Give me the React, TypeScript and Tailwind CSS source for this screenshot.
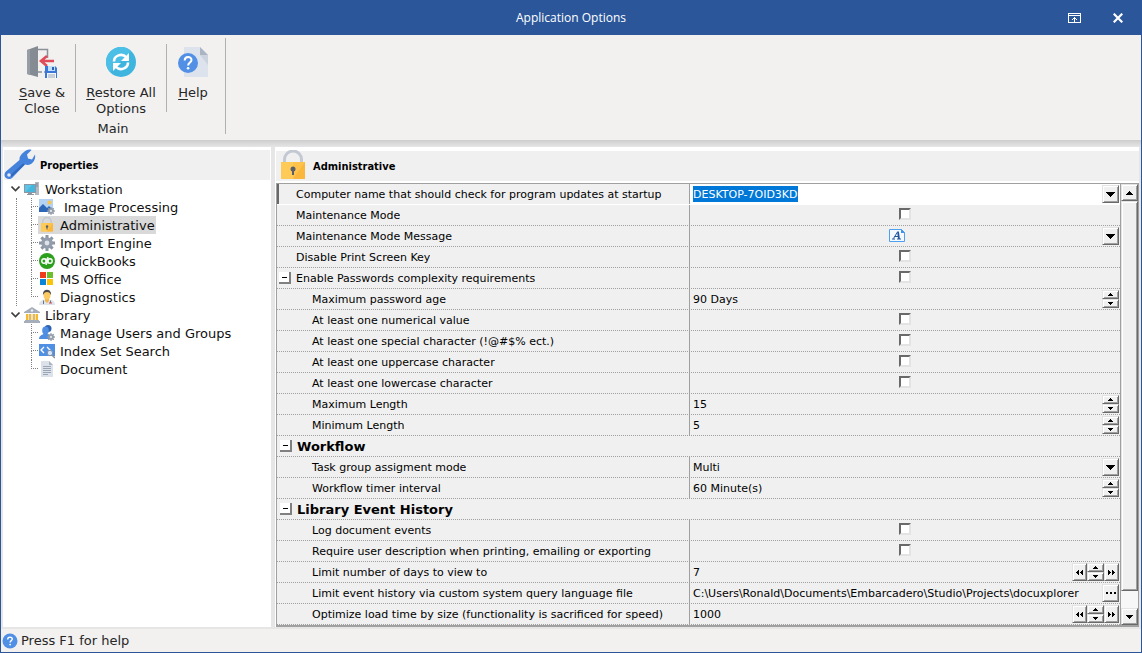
import React from "react";

type Kind = "text" | "check" | "memo" | "spin" | "range" | "select" | "file";

interface Option {
  id: string;
  label: string;
  kind: Kind;
  value?: string;
  level?: number;
  expandable?: boolean;
  active?: boolean;
}

interface Group {
  title?: string;
  options: Option[];
}

interface TreeItem {
  label: string;
  icon: React.ReactNode;
  selected?: boolean;
  indented?: boolean;
}

interface TreeBranch {
  label: string;
  icon: React.ReactNode;
  items: TreeItem[];
}

const groups: Group[] = [
  {
    options: [
      { id: "computer", label: "Computer name that should check for program updates at startup", kind: "text", value: "DESKTOP-7OID3KD", active: true },
      { id: "maintenance", label: "Maintenance Mode", kind: "check" },
      { id: "message", label: "Maintenance Mode Message", kind: "memo" },
      { id: "printscreen", label: "Disable Print Screen Key", kind: "check" },
      { id: "complexity", label: "Enable Passwords complexity requirements", kind: "check", expandable: true },
      { id: "age", label: "Maximum password age", kind: "spin", value: "90 Days", level: 1 },
      { id: "numerical", label: "At least one numerical value", kind: "check", level: 1 },
      { id: "special", label: "At least one special character (!@#$% ect.)", kind: "check", level: 1 },
      { id: "uppercase", label: "At least one uppercase character", kind: "check", level: 1 },
      { id: "lowercase", label: "At least one lowercase character", kind: "check", level: 1 },
      { id: "maxlength", label: "Maximum Length", kind: "spin", value: "15", level: 1 },
      { id: "minlength", label: "Minimum Length", kind: "spin", value: "5", level: 1 },
    ],
  },
  {
    title: "Workflow",
    options: [
      { id: "assignment", label: "Task group assigment mode", kind: "select", value: "Multi", level: 1 },
      { id: "timer", label: "Workflow timer interval", kind: "spin", value: "60 Minute(s)", level: 1 },
    ],
  },
  {
    title: "Library Event History",
    options: [
      { id: "log", label: "Log document events", kind: "check", level: 1 },
      { id: "description", label: "Require user description when printing, emailing or exporting", kind: "check", level: 1 },
      { id: "days", label: "Limit number of days to view to", kind: "range", value: "7", level: 1 },
      { id: "query", label: "Limit event history via custom system query language file", kind: "file", value: "C:\\Users\\Ronald\\Documents\\Embarcadero\\Studio\\Projects\\docuxplorer", level: 1 },
      { id: "optimize", label: "Optimize load time by size (functionality is sacrificed for speed)", kind: "range", value: "1000", level: 1 },
    ],
  },
];

/* ---------- icons ---------- */

const SaveCloseIcon = () => (
  <svg width="32" height="32" viewBox="0 0 32 32" className="shrink-0">
    <path d="M12 3.500h9.500V12M21 26h-3M12 26h4" fill="none" stroke="#8b9199" strokeWidth="1.500" />
    <path d="M1 4l11-4v31L1 28z" fill="#858b93" />
    <path d="M1 4l3-1v26l-3-1z" fill="#979da5" />
    <path d="M21 10l-6 5 6 5M15 15h13" fill="none" stroke="#e14b59" strokeWidth="2.600" />
    <path d="M19 20h10l2 2v10H19z" fill="#3b77d8" />
    <path d="M22 20h7v5h-7z" fill="#bfe0f8" />
    <path d="M26 21h2v3h-2z" fill="#2f5fb0" />
    <path d="M21 27h9v5h-9z" fill="#f4f6f9" />
    <path d="M22 29h7M22 31h7" stroke="#9aa7b8" />
  </svg>
);

const RestoreIcon = () => (
  <svg width="32" height="32" viewBox="0 0 32 32" className="shrink-0">
    <circle cx="16" cy="16" r="15" fill="#3fb4de" />
    <path d="M1 16a15 15 0 0 1 25-11L5 26a15 15 0 0 1-4-10z" fill="#4cbfe6" />
    <g fill="none" stroke="#fff" strokeWidth="2.600">
      <path d="M9 15.500c0-6 8-9 12.500-4" />
      <path d="M23 16.500c0 6-8 9-12.500 4" />
    </g>
    <path d="M24 7v8h-8z" fill="#fff" />
    <path d="M8 25v-8h8z" fill="#fff" />
  </svg>
);

const HelpPageIcon = () => (
  <svg width="32" height="32" viewBox="0 0 32 32" className="shrink-0">
    <path d="M7 1h16l8 8v22H7z" fill="#dde3ec" />
    <path d="M23 9h8v10z" fill="#cbd3df" />
    <path d="M23 1l8 8h-8z" fill="#aab4c3" />
    <circle cx="11" cy="17" r="10" fill="#5290e6" />
    <path d="M7.700 14.500c0-4.600 6.800-4.400 6.800-.5 0 2.500-3.400 2.400-3.400 5.500" fill="none" stroke="#fff" strokeWidth="2" />
    <circle cx="11.100" cy="22.300" r="1.300" fill="#fff" />
  </svg>
);

const WrenchIcon = () => (
  <svg width="32" height="32" viewBox="0 0 32 32">
    <path
      d="M20 3c2-2 5-3 7.500-2L23 5.500l1 4 4 1 3-5c.8 4-1 7.500-4 9.500-2 1.200-4 1.200-6 .6L9 28c-2 2.500-5 2.500-7 1s-2-5 .5-7L15.500 11c-.5-3 1.500-6 4.500-8z"
      fill="#4482dc"
    />
    <path d="M20 15L7 27" fill="none" stroke="#2f68bd" strokeWidth="2" />
    <circle cx="5" cy="26" r="1.800" fill="#dfe9f7" />
  </svg>
);

const LockIcon = ({ size }: { size: number }) => (
  <svg width={size} height={size} viewBox="0 0 32 32">
    <path d="M7.500 13V9.500a8.500 8.500 0 0 1 17 0V13" fill="none" stroke="#c3c9d2" strokeWidth="3" />
    <path d="M4 12h24v17H4z" fill="#ffc24a" />
    <path d="M4 12h12v17H4z" fill="#ffcb58" />
    <path d="M28 12v17H16z" fill="#fbb73c" />
    <circle cx="16" cy="19" r="2.500" fill="#5b6068" />
    <path d="M15 20h2v5h-2z" fill="#5b6068" />
  </svg>
);

const ComputerIcon = () => (
  <svg width="16" height="16" viewBox="0 0 16 16">
    <path d="M11 1h4v13h-4z" fill="#b3bac4" />
    <path d="M12 3h2M12 5h2" stroke="#7f8791" />
    <path d="M0 3h12v9H0z" fill="#8d97a3" />
    <path d="M1 4h10v7H1z" fill="#45b6dc" />
    <path d="M1 4h7l-6 7H1z" fill="#5cc4e6" />
    <path d="M4 12h4v1h2v1H3v-1h1z" fill="#8d97a3" />
  </svg>
);

const Cog = ({ x, y, s }: { x: number; y: number; s: number }) => (
  <g transform={`translate(${x} ${y}) scale(${s})`}>
    <g stroke="#8c96a3" strokeWidth="3">
      <path d="M0-8V8M-8 0H8M-5.600-5.600l11.200 11.200M-5.600 5.600l11.200-11.200" />
    </g>
    <circle r="5.800" fill="#939dab" />
    <circle r="2.400" fill="#dfe3e8" />
  </g>
);

const ImageIcon = () => (
  <svg width="16" height="16" viewBox="0 0 16 16">
    <path d="M0 0h14v13H0z" fill="#b4d2f2" />
    <path d="M0 13V9l4-4 4 4 2-2 4 4v2z" fill="#2c67b8" />
    <circle cx="10.500" cy="3.500" r="2" fill="#fbc548" />
    <Cog x={12} y={12} s={0.48} />
  </svg>
);

const GearIcon = () => (
  <svg width="16" height="16" viewBox="0 0 16 16">
    <Cog x={8} y={8} s={1} />
  </svg>
);

const QuickBooksIcon = () => (
  <svg width="16" height="16" viewBox="0 0 16 16">
    <circle cx="8" cy="8" r="8" fill="#2ca01c" />
    <g fill="none" stroke="#fff" strokeWidth="1.400">
      <circle cx="5" cy="8" r="2.200" />
      <circle cx="11" cy="8" r="2.200" />
      <path d="M7.200 5.500V12M8.800 4V10.500" />
    </g>
  </svg>
);

const OfficeIcon = () => (
  <svg width="16" height="16" viewBox="0 0 16 16">
    <path d="M1 1h6v6H1z" fill="#f03c1c" />
    <path d="M8 1h6v6H8z" fill="#6cbf2c" />
    <path d="M1 8h6v6H1z" fill="#0a84d8" />
    <path d="M8 8h6v6H8z" fill="#fcc30b" />
  </svg>
);

const DoctorIcon = () => (
  <svg width="16" height="16" viewBox="0 0 16 16">
    <path d="M0 16c0-4 3-5 5-5.500h6c2 .5 5 1.500 5 5.500z" fill="#dfe3ea" />
    <path d="M6 9h4v3l-2 2-2-2z" fill="#f0b64a" />
    <ellipse cx="8" cy="6" rx="3.500" ry="4.500" fill="#fbcb62" />
    <path d="M4 6c-1-7 9-7 8 0-1-2-2-3-4-3S5 4 4 6z" fill="#4d4a4c" />
    <path d="M4.500 11.500V15M11.500 11.500V14" stroke="#6b7688" />
    <path d="M10 14h3" stroke="#d8434f" />
  </svg>
);

const LibraryIcon = () => (
  <svg width="16" height="16" viewBox="0 0 16 16">
    <path d="M8 0l8 5v1H0V5z" fill="#a6aebb" />
    <circle cx="8" cy="3.500" r="1.200" fill="#eef0f3" />
    <path d="M2 7h12v6H2z" fill="#dfe2e8" />
    <path d="M2 7h2v6H2zM5 7h2v6H5zM9 7h2v6H9zM12 7h2v6h-2z" fill="#f7b92c" />
    <path d="M1 13h14v1h1v2H0v-2h1z" fill="#a6aebb" />
  </svg>
);

const UsersIcon = () => (
  <svg width="16" height="16" viewBox="0 0 16 16">
    <circle cx="9" cy="3.500" r="3.500" fill="#2e63b2" />
    <ellipse cx="6.500" cy="5.500" rx="3.300" ry="4" fill="#4f8de2" />
    <path d="M0 14c0-4 4-4 5-5.500h3c1 1.500 5 1.500 5 5.500z" fill="#4f8de2" />
    <Cog x={12} y={12} s={0.48} />
  </svg>
);

const IndexIcon = () => (
  <svg width="16" height="16" viewBox="0 0 16 16">
    <path d="M0 1h16v12H0z" fill="#4f8fe4" />
    <path d="M5 4L2 7l3 3M8 4l3 3-1 1" fill="none" stroke="#fff" strokeWidth="1.300" />
    <circle cx="11" cy="10" r="2.700" fill="#d5e4f6" stroke="#8290a3" />
    <path d="M13 12l3 3" stroke="#8290a3" strokeWidth="1.500" />
  </svg>
);

const DocumentIcon = () => (
  <svg width="16" height="16" viewBox="0 0 16 16">
    <path d="M2 0h8l4 4v12H2z" fill="#dde2ea" />
    <path d="M10 0l4 4h-4z" fill="#aab3c0" />
    <path d="M4 5.500h8M4 7.500h8M4 9.500h8M4 11.500h8M4 13.500h5" stroke="#9aa5b5" />
  </svg>
);

const HelpIcon = () => (
  <svg width="16" height="16" viewBox="0 0 16 16">
    <circle cx="8" cy="8" r="7.500" fill="#4f8fe6" />
    <path d="M5.700 6.400c0-3 4.600-2.900 4.600-.3 0 1.600-2.200 1.500-2.200 3.400" fill="none" stroke="#fff" strokeWidth="1.400" />
    <circle cx="8.100" cy="11.600" r=".9" fill="#fff" />
  </svg>
);

const MemoIcon = () => (
  <svg width="16" height="13" viewBox="0 0 16 13">
    <path d="M.5.500h12l3 3v9H.5z" fill="#f4f9ff" stroke="#4d9ff0" />
    <path d="M12 0l4 4h-4z" fill="#3f93ec" />
    <path d="M4.500 9.500L8.500 3M5.500 7.500h4M3 10h3M8 10h4" fill="none" stroke="#1f55a0" />
    <path d="M9 2.500l1 7.500" stroke="#1f55a0" strokeWidth="1.800" />
  </svg>
);

const Glyph = ({ d, w, h }: { d: string; w: number; h: number }) => (
  <svg width={w} height={h} viewBox={`0 0 ${w} ${h}`} shapeRendering="crispEdges" className="pointer-events-none">
    <path d={d} />
  </svg>
);

const Down = () => <Glyph w={9} h={5} d="M0 0h9v1H8v1H7v1H6v1H5v1H4V4H3V3H2V2H1V1H0z" />;
const Up = () => <Glyph w={7} h={4} d="M3 0h1v1h1v1h1v1h1v1H0V3h1V2h1V1h1z" />;
const DownMid = () => <Glyph w={7} h={4} d="M0 0h7v1H6v1H5v1H4v1H3V3H2V2H1V1H0z" />;
const UpSmall = () => <Glyph w={5} h={3} d="M2 0h1v1h1v1h1v1H0V2h1V1h1z" />;
const DownSmall = () => <Glyph w={5} h={3} d="M0 0h5v1H4v1H3v1H2V2H1V1H0z" />;
const Rewind = () => <Glyph w={7} h={5} d="M2 0h1v5H2V4H1V3H0V2h1V1h1zM6 0h1v5H6V4H5V3H4V2h1V1h1z" />;
const Forward = () => <Glyph w={7} h={5} d="M0 0h1v1h1v1h1v1H2v1H1v1H0zM4 0h1v1h1v1h1v1H6v1H5v1H4z" />;
const Dots = () => <Glyph w={10} h={2} d="M0 0h2v2H0zM4 0h2v2H4zM8 0h2v2H8z" />;

/* ---------- controls ---------- */

const bevel =
  "flex shrink-0 items-center justify-center border border-t-[#e3e3e3] border-l-[#e3e3e3] border-r-[#696969] border-b-[#696969] bg-[#f0f0f0] shadow-[inset_1px_1px_0_#fff,inset_-1px_-1px_0_#a0a0a0]";

interface BevelProps {
  label: string;
  className: string;
  children?: React.ReactNode;
}

const BevelButton = ({ label, className, children }: BevelProps) => (
  <button type="button" aria-label={label} className={`${bevel} ${className}`}>
    {children}
  </button>
);

const Spinner = () => (
  <div className="flex flex-col">
    <BevelButton label="Increase" className="h-[9px] w-[17px]">
      <UpSmall />
    </BevelButton>
    <BevelButton label="Decrease" className="h-[9px] w-[17px]">
      <DownSmall />
    </BevelButton>
  </div>
);

const Expander = ({ label }: { label: string }) => (
  <button
    type="button"
    aria-label={`Collapse ${label}`}
    className="flex size-3 items-center justify-center border-r-2 border-b-2 border-r-[#808080] border-b-[#808080] bg-white"
  >
    <span className="h-px w-[5px] bg-black" />
  </button>
);

const Editor = ({ id, kind, value, active }: Option) => {
  const input = (
    <input
      id={id}
      type="text"
      defaultValue={value}
      className="h-[18px] min-w-0 flex-1 bg-transparent pt-px outline-none"
    />
  );

  if (kind === "check") {
    return (
      <div className="flex flex-1 justify-center">
        <input
          id={id}
          type="checkbox"
          className="mb-0.5 size-3 appearance-none border-2 border-t-[#696969] border-l-[#696969] border-r-[#e3e3e3] border-b-[#e3e3e3] bg-white"
        />
      </div>
    );
  }

  if (kind === "memo") {
    return (
      <>
        <div className="flex flex-1 justify-center pr-0.5">
          <button id={id} type="button" className="mb-px">
            <MemoIcon />
          </button>
        </div>
        <BevelButton label="Open message" className="h-[18px] w-[17px]">
          <Down />
        </BevelButton>
      </>
    );
  }

  if (kind === "select") {
    return (
      <>
        <select id={id} className="h-[18px] min-w-0 flex-1 appearance-none bg-transparent pt-0.5 outline-none">
          <option>{value}</option>
        </select>
        <BevelButton label="Open list" className="h-[18px] w-[17px]">
          <Down />
        </BevelButton>
      </>
    );
  }

  if (kind === "range") {
    return (
      <>
        {input}
        <BevelButton label="Fast back" className="h-[18px] w-[15px]">
          <Rewind />
        </BevelButton>
        <Spinner />
        <BevelButton label="Fast forward" className="h-[18px] w-[15px]">
          <Forward />
        </BevelButton>
      </>
    );
  }

  if (kind === "file") {
    return (
      <>
        {input}
        <BevelButton label="Browse" className="h-[18px] w-[17px]">
          <Dots />
        </BevelButton>
      </>
    );
  }

  if (active) {
    return (
      <>
        <input
          id={id}
          type="text"
          defaultValue={value}
          className="field-sizing-content h-4 bg-[#0078d7] pt-px text-white outline-none"
        />
        <div className="flex-1" />
        <BevelButton label="Open list" className="h-[18px] w-[17px]">
          <Down />
        </BevelButton>
      </>
    );
  }

  return (
    <>
      {input}
      <Spinner />
    </>
  );
};

const OptionRow = (option: Option) => {
  const { id, label, level, expandable, active } = option;
  return (
    <div
      className={`flex h-[21px] border-b ${
        active ? "border-white" : "border-dotted border-[#a0a0a0]"
      }`}
    >
      <div
        className={`flex w-[413px] shrink-0 items-center border-r border-[#a0a0a0] ${
          active ? "border-l-2 border-l-[#696969]" : "pl-0.5"
        }`}
      >
        <div className="w-[17px] shrink-0">{expandable && <Expander label={label} />}</div>
        <label htmlFor={id} className={`truncate pt-0.5 ${level ? "pl-4" : ""}`}>
          {label}
        </label>
      </div>
      <div
        className={`flex min-w-0 flex-1 items-center pr-px ${
          option.kind === "check" ? "" : "pl-[3px]"
        } ${active ? "bg-white" : ""}`}
      >
        <Editor {...option} />
      </div>
    </div>
  );
};

const PropertyGrid = () => (
  <div className="flex border-t border-b-2 border-l border-[#a0a0a0]">
    <div className="min-w-0 flex-1 bg-[#f0f0f0] text-[11px] leading-4 text-black">
      {groups.map((group, index) => (
        <React.Fragment key={index}>
          {group.title && (
            <div className="flex h-[21px] items-center border-b border-dotted border-[#a0a0a0] pl-[3px]">
              <Expander label={group.title} />
              <h3 className="pt-0.5 pl-[5px] text-[13px] font-bold">{group.title}</h3>
            </div>
          )}
          {group.options.map((option) => (
            <OptionRow key={option.id} {...option} />
          ))}
        </React.Fragment>
      ))}
    </div>
    <div className="flex w-[19px] flex-col border-r border-l border-[#a0a0a0] bg-[#f7f7f7]">
      <BevelButton label="Scroll up" className="h-[17px] w-full">
        <Up />
      </BevelButton>
      <div className={`${bevel} h-[390px] w-full`} />
      <div className="flex-1" />
      <BevelButton label="Scroll down" className="h-[17px] w-full">
        <DownMid />
      </BevelButton>
    </div>
  </div>
);

/* ---------- tree ---------- */

const tree: TreeBranch[] = [
  {
    label: "Workstation",
    icon: <ComputerIcon />,
    items: [
      { label: "Image Processing", icon: <ImageIcon />, indented: true },
      { label: "Administrative", icon: <LockIcon size={16} />, selected: true },
      { label: "Import Engine", icon: <GearIcon /> },
      { label: "QuickBooks", icon: <QuickBooksIcon /> },
      { label: "MS Office", icon: <OfficeIcon /> },
      { label: "Diagnostics", icon: <DoctorIcon /> },
    ],
  },
  {
    label: "Library",
    icon: <LibraryIcon />,
    items: [
      { label: "Manage Users and Groups", icon: <UsersIcon /> },
      { label: "Index Set Search", icon: <IndexIcon /> },
      { label: "Document", icon: <DocumentIcon /> },
    ],
  },
];

const Branch = ({ label, icon, items, last }: TreeBranch & { last: boolean }) => (
  <li>
    <button type="button" className="flex h-[18px] items-center">
      <span className="flex w-[21px] justify-end pr-1">
        <svg width="9" height="6" viewBox="0 0 9 6" fill="none" stroke="#404040" strokeWidth="1.600">
          <path d="M.5.500l4 4 4-4" />
        </svg>
      </span>
      {icon}
      <span className="pt-0.5 pl-[5px]">{label}</span>
    </button>
    <ul className={last ? "ml-[13px]" : "ml-[13px] border-l border-dotted border-[#808080]"}>
      {items.map((item, index) => (
        <li key={item.label} className={`flex h-[18px] ${last ? "pl-[15px]" : "pl-[14px]"}`}>
          <span className="flex w-[7px] flex-col">
            <span className="h-[9px] border-b border-l border-dotted border-[#808080]" />
            {index < items.length - 1 && (
              <span className="h-[9px] border-l border-dotted border-[#808080]" />
            )}
          </span>
          <button
            type="button"
            className={`flex items-center px-px ${item.selected ? "bg-[#d9d9d9]" : ""}`}
          >
            {item.icon}
            <span className={`pt-0.5 ${item.indented ? "pl-[9px]" : "pl-[5px]"}`}>{item.label}</span>
          </button>
        </li>
      ))}
    </ul>
  </li>
);

/* ---------- ribbon ---------- */

interface RibbonProps {
  icon: React.ReactNode;
  accel: string;
  rest: string;
  second?: string;
  className: string;
}

const RibbonButton = ({ icon, accel, rest, second, className }: RibbonProps) => (
  <button type="button" className={`flex flex-col items-center pt-0.5 ${className}`}>
    {icon}
    <span className="pt-[7px] whitespace-nowrap">
      <u className="underline-offset-2">{accel}</u>
      {rest}
    </span>
    {second && <span>{second}</span>}
  </button>
);

const Separator = () => <div className="h-[68px] w-px bg-[#b1b1b1]" />;

const App = () => {
  return (
    <div className="flex min-h-screen flex-col border border-t-0 border-[#2b579a] bg-[#e6e6e6] font-['DejaVu_Sans',Verdana,sans-serif] text-[13px] leading-4">
      <header className="grid h-[35px] grid-cols-[1fr_auto_1fr] items-center bg-[#2b579a] font-['Open_Sans','Segoe_UI',sans-serif] text-xs text-white">
        <span />
        <h1>Application Options</h1>
        <div className="flex justify-end gap-8 pr-[18px]">
          <button type="button" aria-label="Minimize ribbon">
            <svg width="13" height="10" viewBox="0 0 13 10" shapeRendering="crispEdges">
              <path d="M.5.500h12v9H.5zM0 2.500h13M6.500 4v5M5.500 5v1M7.500 5v1M4.500 6v1M8.500 6v1" fill="none" stroke="#fff" />
            </svg>
          </button>
          <button type="button" aria-label="Close">
            <svg width="10" height="10" viewBox="0 0 10 10">
              <path d="M.7.700l8.600 8.600M9.300.700L.7 9.300" stroke="#fff" strokeWidth="2.200" />
            </svg>
          </button>
        </div>
      </header>

      <div className="flex h-[105px] items-start bg-[#f2f1f0] pt-[3px] text-[#262626]">
        <section className="pt-1.5">
          <div className="flex items-start">
            <RibbonButton icon={<SaveCloseIcon />} accel="S" rest="ave &" second="Close" className="w-[74px] pl-2" />
            <Separator />
            <RibbonButton icon={<RestoreIcon />} accel="R" rest="estore All" second="Options" className="w-[90px]" />
            <Separator />
            <RibbonButton icon={<HelpPageIcon />} accel="H" rest="elp" className="w-[58px] pr-1.5" />
          </div>
          <h2 className="pt-1 text-center">Main</h2>
        </section>
        <div className="h-24 w-px bg-[#b1b1b1]" />
      </div>
      <div className="h-[7px] bg-linear-to-b from-[#cdcdcd] to-[#e6e6e6]" />

      <main className="flex flex-1 gap-1 pr-0.5 pb-0.5 pl-0.5">
        <aside className="w-[268px] shrink-0 bg-white">
          <div className="flex h-[33px] flex-col justify-end px-px">
            <div className="flex h-[30px] items-center bg-[#f0f0f0]">
              <WrenchIcon />
              <h2 className="pt-0.5 pl-1 font-['DejaVu_Sans_Condensed','DejaVu_Sans',sans-serif] text-[11px] font-bold text-black">
                Properties
              </h2>
            </div>
          </div>
          <ul className="text-[#101010]">
            {tree.map((branch, index) => (
              <Branch key={branch.label} {...branch} last={index === tree.length - 1} />
            ))}
          </ul>
        </aside>

        <section className="min-w-0 flex-1 bg-white pt-1 pl-px">
          <div className="mb-0.5 flex h-[30px] items-center bg-[#f0f0f0] pl-px">
            <LockIcon size={32} />
            <h2 className="pt-0.5 pl-1 font-['DejaVu_Sans_Condensed','DejaVu_Sans',sans-serif] text-[11px] font-bold text-black">
              Administrative
            </h2>
          </div>
          <PropertyGrid />
        </section>
      </main>

      <footer className="flex h-[23px] items-center gap-[3px] bg-[#f2f1f0] pl-px text-[#262626]">
        <HelpIcon />
        <span>Press F1 for help</span>
      </footer>
    </div>
  );
};

export default App;
